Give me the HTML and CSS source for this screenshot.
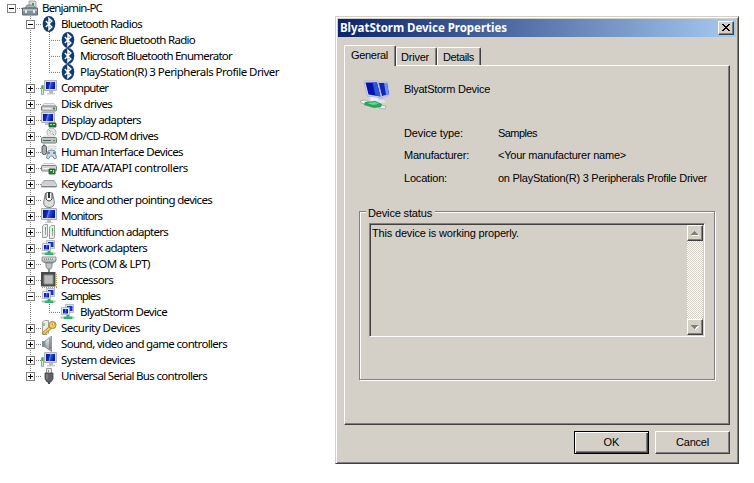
FILE: index.html
```html
<!DOCTYPE html>
<html lang="en">
<head>
<meta charset="utf-8">
<title>Device Manager</title>
<link rel="stylesheet" href="styles.css">
</head>
<body>
<svg class="defs" aria-hidden="true">
  <defs>
    <linearGradient id="scr" x1="0" y1="0" x2="1" y2=".2"><stop offset="0" stop-color="#0a1490"/><stop offset=".42" stop-color="#1428b8"/><stop offset=".5" stop-color="#6488f0"/><stop offset=".65" stop-color="#2444d8"/><stop offset="1" stop-color="#0818a8"/></linearGradient>
    <linearGradient id="met" x1="0" y1="0" x2="0" y2="1"><stop offset="0" stop-color="#f6f6f6"/><stop offset="1" stop-color="#8c9092"/></linearGradient>
    <symbol id="i-pc" viewBox="0 0 16 16"><path d="M7 1h6l1 1v7H7z" fill="#d8dcda" stroke="#8c9492" stroke-width=".8"/><path d="M10 3h2v3h-2z" fill="#30b030"/><path d="M3 8l2-3h6l3 3z" fill="#a8b4b8" stroke="#6c787c" stroke-width=".7"/><path d="M.5 8h15v7H.5z" fill="#82919a" stroke="#5c686e"/><path d="M1 9h14v2H1z" fill="#aebac0"/><path d="M3 10h2v3H3zM11 10h2v3h-2z" fill="#e4e8ea"/></symbol>
    <symbol id="i-bt" viewBox="0 0 16 16"><ellipse cx="8" cy="8" rx="6.300" ry="8" fill="#123c70"/><path d="M4.800 5l6 6L8 13.600V2.400L10.800 5l-6 6" fill="none" stroke="#fff" stroke-width="1.500"/></symbol>
    <symbol id="i-comp" viewBox="0 0 16 16"><path d="M.5 5.500h2v9h-2z" fill="#dce2dc" stroke="#8a948c" stroke-width=".8"/><path d="M1 6h1v3H1z" fill="#32b848"/><path d="M3.500.5h12v10h-12z" fill="#d8dbe0" stroke="#b0b4ba"/><path d="M5 2h9v7H5z" fill="url(#scr)"/><path d="M8 11h4v2H8z" fill="#b4b8bc"/><path d="M6 13h8v1.500H6z" fill="#c8cbce"/></symbol>
    <symbol id="i-disk" viewBox="0 0 16 16"><path d="M3 7.500h10l2.500 3H.5z" fill="#e9ebeb" stroke="#b4b8b8" stroke-width=".7"/><rect x=".5" y="10" width="15" height="5" rx="1" fill="#c9cdce" stroke="#777d7e"/><path d="M2 12h8v1H2z" fill="#eee"/><path d="M12 11.500h2v2h-2z" fill="#22a030"/></symbol>
    <symbol id="i-disp" viewBox="0 0 16 16"><path d="M.5.5h13v10H.5z" fill="#d8dbe0" stroke="#b0b4ba"/><path d="M2 2h10v7H2z" fill="url(#scr)"/><path d="M4 11h5v2H4z" fill="#c0c4c8"/><path d="M8 11h7v4H8z" fill="#267c38" stroke="#145628" stroke-width=".8"/><path d="M9 12h2v1H9zM12 12h2v1h-2z" fill="#b8dfa8"/></symbol>
    <symbol id="i-dvd" viewBox="0 0 16 16"><circle cx="10.500" cy="4.500" r="4.500" fill="#e5e8e6" stroke="#9ca4a0" stroke-width=".8"/><path d="M8 2l2 2M11 5l2 2" stroke="#58bf70"/><circle cx="10.500" cy="4.500" r="1.300" fill="#fff" stroke="#aaa" stroke-width=".6"/><path d="M3 7.500h10l2.500 2H.5z" fill="#e4e6e6"/><rect x=".5" y="9.500" width="15" height="5.500" rx="1" fill="#bfc4c6" stroke="#70787a"/><path d="M2 12h8v1H2z" fill="#555e60"/><path d="M12 12h2v1h-2z" fill="#22a030"/></symbol>
    <symbol id="i-hid" viewBox="0 0 16 16"><path d="M3 0v3" stroke="#777"/><rect x="1" y="1.500" width="4.500" height="9" rx="2" fill="#a7adb0" stroke="#4e5458"/><path d="M7 2h8v3H7z" fill="#eceeef" stroke="#c5c8ca" stroke-width=".7"/><path d="M7 7q3-2 7 0l1.500 7-2 1-2-3h-2l-2 3-2-1z" fill="#cedae4" stroke="#6d8494" stroke-width=".9"/><path d="M7 9h2M12 9h2" stroke="#426f98" stroke-width="1.300"/></symbol>
    <symbol id="i-ide" viewBox="0 0 16 16"><path d="M3 3.500h10l2 2H1z" fill="#f0f1f1" stroke="#bbb" stroke-width=".7"/><rect x=".5" y="5.500" width="15" height="5.500" rx="1" fill="#d0d3d4" stroke="#7e8485"/><path d="M2 8h7v1H2z" fill="#f5f5f5"/><path d="M8 9h6v5H8z" fill="#287f3a" stroke="#145628" stroke-width=".8"/><path d="M9 10h2v1H9zM12 10h1v3h-1z" fill="#b8dfa8"/></symbol>
    <symbol id="i-kb" viewBox="0 0 16 16"><path d="M3 4.500h10l2.500 4v2.500H.5V8.500z" fill="#d9dcdf" stroke="#92989c" stroke-width=".9"/><path d="M3.500 6h9M2.500 8h11" stroke="#a2a7ab" stroke-dasharray="1 1"/><path d="M1 10.500h14" stroke="#777d80"/></symbol>
    <symbol id="i-mouse" viewBox="0 0 16 16"><path d="M4.500 1q3.500-2 7 0l1.800 9q.2 5.500-5.300 5.500T2.700 10z" fill="#dcdedf" stroke="#707476" stroke-width=".9"/><path d="M5 1v6q3 4 6 0V1" fill="#f7f7f7" stroke="#404446"/><path d="M8 0v6" stroke="#35383a" stroke-width="2"/></symbol>
    <symbol id="i-mon" viewBox="0 0 16 16"><path d="M.5.5h15v11H.5z" fill="#dcdfe3" stroke="#a8acb2"/><path d="M2 2h12v8H2z" fill="url(#scr)"/><path d="M6 12h4v2H6z" fill="#b8bcc0"/><path d="M4 14h8v1H4z" fill="#c8cbce"/></symbol>
    <symbol id="i-multi" viewBox="0 0 16 16"><path d="M1.500 2l2-1.500h3V12l-1 1.500h-4zM8.500 3l2-1.500h3V13l-1 1.500h-4z" fill="#eceeec" stroke="#8d9490" stroke-width=".9"/><path d="M4.500 4v7M11.500 5v7" stroke="#a0a7a3"/><path d="M4 3h1v3H4zM11 4h1v3h-1z" fill="#35b24a"/></symbol>
    <symbol id="i-net" viewBox="0 0 16 16"><path d="M5.500.5h8v8h-8z" fill="#dce2ea" stroke="#a2acb8" stroke-width=".8"/><path d="M7 2h5.500v5H7z" fill="#1834c4"/><path d="M1.500 3.500h8v7h-8z" fill="#e4e9ef" stroke="#a2acb8" stroke-width=".8"/><path d="M3 5h5v4.500H3z" fill="url(#scr)"/><path d="M6.500 11h3v1.500h3v2.500h-9v-2.500h3z" fill="#2eb56c"/><path d="M.5 12.500h3v2h-3zM12.500 12.500h2v2h-2z" fill="#b8c6bf"/></symbol>
    <symbol id="i-port" viewBox="0 0 16 16"><path d="M1 1h14v4l-3 2H4L1 5z" fill="url(#met)" stroke="#71777a" stroke-width=".8"/><path d="M3 3h10" stroke="#5c6264" stroke-dasharray="1 1"/><path d="M5 7h6v4l-1.500 2h-3L5 11z" fill="#bfc4c7" stroke="#757b7e" stroke-width=".8"/><path d="M7 13h2v3H7z" fill="#888e91"/></symbol>
    <symbol id="i-cpu" viewBox="0 0 16 16"><path d="M1 15.500h15M15.500 2v14" stroke="#b89c50" stroke-dasharray="1 1"/><path d="M0 0h14.500v14.500H0z" fill="#4a4a48"/><path d="M3 3h9v9H3z" fill="#b9bbbc" stroke="#8b8d8e"/></symbol>
    <symbol id="i-sec" viewBox="0 0 16 16"><path d="M1.500 2l2-1.500h4V13l-1.500 1.500H1.500z" fill="#e9ebe8" stroke="#8d938c" stroke-width=".8"/><path d="M2.500 3h1v3h-1z" fill="#35a447"/><path d="M2 14l8-7" stroke="#a77e20" stroke-width="3.500"/><path d="M2.500 13.500l8-7" stroke="#f2cb5c" stroke-width="2"/><circle cx="11.500" cy="5" r="3.600" fill="#f2c95c" stroke="#a77e20" stroke-width=".9"/><circle cx="12.500" cy="4" r="1.200" fill="#fff" stroke="#a77e20" stroke-width=".6"/></symbol>
    <symbol id="i-snd" viewBox="0 0 16 16"><path d="M1 5h4v6H1z" fill="#859098"/><path d="M4 5l6.500-5v15.500L4 11z" fill="url(#met)" stroke="#78858e" stroke-width=".8"/><path d="M9 2v11" stroke="#56636c"/></symbol>
    <symbol id="i-usb" viewBox="0 0 16 16"><path d="M5.500.5h5v5h-5z" fill="#e5e7e8" stroke="#92979a"/><path d="M7 2h1v2H7z" fill="#888"/><path d="M4 5h8v6l-2 3H6l-2-3z" fill="#5c6265" stroke="#404548" stroke-width=".8"/><path d="M6 6v5" stroke="#92989b"/><path d="M7 14h2v2H7z" fill="#4b5053"/></symbol>
    <symbol id="i-big" viewBox="0 0 32 32"><path d="M16 2l13-1 2 15-8 3-4-1z" fill="#b9c3d8"/><path d="M18 3h10l2 11-7 2z" fill="#1024b8"/><path d="M25 3h3l2 11-3 1z" fill="#6b8ff0"/><path d="M5 1h14l4 17-15-2z" fill="#d2d9ea" stroke="#aab4cc" stroke-width=".8"/><path d="M6.500 2.500h11.500l3.500 14-12-2z" fill="#0712ac"/><path d="M13.500 2.500H18l3.500 14-5-1z" fill="#2c55df"/><path d="M11 17l8 1 1 4-8 1z" fill="#edf0f7"/><path d="M11 22q4-3 14-2l2 2q-8 3-15 1z" fill="#dfe3ed"/><path d="M1 21l5-1 4 2-3 2-5-1zM20 25l7 1-1 3-6-1z" fill="#edf3ee" stroke="#9aa69e" stroke-width=".8"/><path d="M6 22l10-1 7 3-1 3-7 1-10-3z" fill="#25a65b"/><path d="M8 23l8-1 4 2-6 1z" fill="#65d889"/></symbol>
  </defs>
</svg>
<main class="desktop">
  <ul class="tree">
    <li class="row l0"><i class="box minus"></i><i class="dots"></i><svg class="ico"><use href="#i-pc"/></svg><span data-w="60">Benjamin-PC</span></li>
    <li class="row"><i class="box minus"></i><i class="dots"></i><svg class="ico"><use href="#i-bt"/></svg><span data-w="81">Bluetooth Radios</span></li>
    <li class="row l2"><i class="dots"></i><svg class="ico"><use href="#i-bt"/></svg><span data-w="115">Generic Bluetooth Radio</span></li>
    <li class="row l2"><i class="dots"></i><svg class="ico"><use href="#i-bt"/></svg><span data-w="152">Microsoft Bluetooth Enumerator</span></li>
    <li class="row l2 last"><i class="dots"></i><svg class="ico"><use href="#i-bt"/></svg><span data-w="199">PlayStation(R) 3 Peripherals Profile Driver</span></li>
    <li class="row"><i class="box"></i><i class="dots"></i><svg class="ico"><use href="#i-comp"/></svg><span data-w="47">Computer</span></li>
    <li class="row"><i class="box"></i><i class="dots"></i><svg class="ico"><use href="#i-disk"/></svg><span data-w="51">Disk drives</span></li>
    <li class="row"><i class="box"></i><i class="dots"></i><svg class="ico"><use href="#i-disp"/></svg><span data-w="80">Display adapters</span></li>
    <li class="row"><i class="box"></i><i class="dots"></i><svg class="ico"><use href="#i-dvd"/></svg><span data-w="97">DVD/CD-ROM drives</span></li>
    <li class="row"><i class="box"></i><i class="dots"></i><svg class="ico"><use href="#i-hid"/></svg><span data-w="122">Human Interface Devices</span></li>
    <li class="row"><i class="box"></i><i class="dots"></i><svg class="ico"><use href="#i-ide"/></svg><span data-w="127">IDE ATA/ATAPI controllers</span></li>
    <li class="row"><i class="box"></i><i class="dots"></i><svg class="ico"><use href="#i-kb"/></svg><span data-w="51">Keyboards</span></li>
    <li class="row"><i class="box"></i><i class="dots"></i><svg class="ico"><use href="#i-mouse"/></svg><span data-w="151">Mice and other pointing devices</span></li>
    <li class="row"><i class="box"></i><i class="dots"></i><svg class="ico"><use href="#i-mon"/></svg><span data-w="41">Monitors</span></li>
    <li class="row"><i class="box"></i><i class="dots"></i><svg class="ico"><use href="#i-multi"/></svg><span data-w="107">Multifunction adapters</span></li>
    <li class="row"><i class="box"></i><i class="dots"></i><svg class="ico"><use href="#i-net"/></svg><span data-w="86">Network adapters</span></li>
    <li class="row"><i class="box"></i><i class="dots"></i><svg class="ico"><use href="#i-port"/></svg><span data-w="89">Ports (COM &amp; LPT)</span></li>
    <li class="row"><i class="box"></i><i class="dots"></i><svg class="ico"><use href="#i-cpu"/></svg><span data-w="52">Processors</span></li>
    <li class="row"><i class="box minus"></i><i class="dots"></i><svg class="ico"><use href="#i-net"/></svg><span data-w="39">Samples</span></li>
    <li class="row l2 last"><i class="dots"></i><svg class="ico"><use href="#i-net"/></svg><span data-w="87">BlyatStorm Device</span></li>
    <li class="row"><i class="box"></i><i class="dots"></i><svg class="ico"><use href="#i-sec"/></svg><span data-w="79">Security Devices</span></li>
    <li class="row"><i class="box"></i><i class="dots"></i><svg class="ico"><use href="#i-snd"/></svg><span data-w="166">Sound, video and game controllers</span></li>
    <li class="row"><i class="box"></i><i class="dots"></i><svg class="ico"><use href="#i-comp"/></svg><span data-w="74">System devices</span></li>
    <li class="row end"><i class="box"></i><i class="dots"></i><svg class="ico"><use href="#i-usb"/></svg><span data-w="146">Universal Serial Bus controllers</span></li>
  </ul>
  <section class="dialog">
    <header class="title"><span data-w="167">BlyatStorm Device Properties</span><button class="close" aria-label="Close"><svg width="8" height="7" viewBox="0 0 8 7" shape-rendering="crispEdges"><path d="M0 0h2v1h1v1h2V1h1V0h2v1H7v1H6v1H5v1h1v1h1v1h1v1H6V6H5V5H3v1H2v1H0V6h1V5h1V4h1V3H2V2H1V1H0z"/></svg></button></header>
    <nav class="tabs"><div class="tab active"><span data-w="37">General</span></div><div class="tab"><span data-w="28">Driver</span></div><div class="tab third"><span data-w="31">Details</span></div></nav>
    <div class="panel">
      <div class="device"><svg class="big"><use href="#i-big"/></svg><span data-w="86">BlyatStorm Device</span></div>
      <dl class="info">
        <dt><span data-w="59">Device type:</span></dt><dd><span data-w="39">Samples</span></dd>
        <dt><span data-w="65">Manufacturer:</span></dt><dd><span data-w="128">&lt;Your manufacturer name&gt;</span></dd>
        <dt><span data-w="43">Location:</span></dt><dd><span data-w="209">on PlayStation(R) 3 Peripherals Profile Driver</span></dd>
      </dl>
      <div class="group">
        <div class="legend"><span data-w="64">Device status</span></div>
        <div class="status"><p><span data-w="147">This device is working properly.</span></p>
          <div class="scroll"><div class="sb"><svg width="8" height="5" viewBox="0 0 8 5" shape-rendering="crispEdges"><path d="M1 4h7v1H1z" fill="#fff"/><path d="M3 0h1v1h1v1h1v1h1v1H0V3h1V2h1V1h1z" fill="#808080"/></svg></div><div class="sb"><svg width="8" height="5" viewBox="0 0 8 5" shape-rendering="crispEdges"><path d="M7 1h1v1H7v1H6v1H5v1H4V4h1V2h1V1z" fill="#fff"/><path d="M0 0h7v1H6v1H5v1H4v1H3V3H2V2H1V1H0z" fill="#808080"/></svg></div></div>
        </div>
      </div>
    </div>
    <footer class="buttons"><button class="btn ok"><span data-w="16">OK</span></button><button class="btn"><span data-w="33">Cancel</span></button></footer>
  </section>
</main>
<script src="fit.js"></script>
</body>
</html>
```
FILE: styles.css
```css
* { box-sizing: border-box; margin: 0; padding: 0; }
body { background: #fff; color: #000; overflow: hidden; }
.defs { position: absolute; width: 0; height: 0; }
.desktop { display: flex; align-items: flex-start; width: 754px; height: 483px; }
span { white-space: nowrap; }

.tree { width: 335px; list-style: none; font: 11.5px/16px "Noto Sans", "Open Sans", sans-serif; }
.row {
  display: flex; align-items: center; height: 16px; padding-left: 26px;
  background: repeating-linear-gradient(#808080 0 1px, transparent 1px 2px) 30px 0 / 1px 16px no-repeat;
}
.row.l0 { padding-left: 7px; background: none; }
.row.l2 {
  padding-left: 50px;
  background:
    repeating-linear-gradient(#808080 0 1px, transparent 1px 2px) 30px 0 / 1px 16px no-repeat,
    repeating-linear-gradient(#808080 0 1px, transparent 1px 2px) 49px 0 / 1px 16px no-repeat;
}
.row.l2.last { background-size: 1px 16px, 1px 9px; }
.row.end { background-size: 1px 9px; }
.row.l2 .dots { width: 10px; }
.box {
  width: 9px; height: 9px; flex: none; border: 1px solid #808080;
  background:
    linear-gradient(#000, #000) 1px 3px / 5px 1px no-repeat,
    linear-gradient(#000, #000) 3px 1px / 1px 5px no-repeat, #fff;
}
.box.minus { background: linear-gradient(#000, #000) 1px 3px / 5px 1px no-repeat, #fff; }
.dots { width: 6px; height: 1px; flex: none; background: repeating-linear-gradient(90deg, transparent 0 1px, #808080 1px 2px); }
.ico { width: 16px; height: 16px; flex: none; }
.row span { margin-left: 4px; }

.dialog {
  width: 404px; height: 448px; margin-top: 16px; padding: 1px; background: #d4d0c8;
  border: 1px solid; border-color: #d4d0c8 #404040 #404040 #d4d0c8;
  box-shadow: inset 1px 1px #fff, inset -1px -1px #808080;
  font: 11px/13px "Liberation Sans", Arial, sans-serif;
}
.title {
  display: flex; align-items: center; justify-content: space-between; height: 18px; margin: 1px;
  padding: 0 2px; background: linear-gradient(90deg, #0a246a, #a6caf0);
  color: #fff; font: bold 11.5px/18px "Noto Sans", "Open Sans", sans-serif;
}
button { background: #d4d0c8; border: 0; font: inherit; color: #000; }
.close, .sb, .btn {
  border: 1px solid; border-color: #fff #404040 #404040 #fff;
  box-shadow: inset -1px -1px #808080;
}
.close { display: flex; width: 16px; height: 14px; padding: 2px 0 0 3px; }
.tabs { display: flex; align-items: flex-end; height: 20px; margin: 8px 7px 0; }
.tab {
  height: 18px; width: 41px; padding: 3px 0 0 4px; border: 1px solid;
  border-color: #fff #404040 transparent #fff; border-bottom: 0; border-radius: 2px 2px 0 0;
  box-shadow: inset -1px 0 #808080;
}
.tab.active { position: relative; width: 52px; height: 21px; padding: 3px 0 0 6px; margin-bottom: -1px; background: #d4d0c8; }
.tab.third { width: 44px; padding-left: 5px; }
.panel {
  width: 386px; height: 360px; margin-left: 7px; padding: 14px;
  border: 1px solid; border-color: #fff #404040 #404040 #fff; box-shadow: inset -1px -1px #808080;
}
.device { display: flex; height: 47px; gap: 13px; }
.device span { margin-top: 3px; }
.big { width: 32px; height: 32px; }
.info { display: grid; grid-template-columns: 94px 1fr; grid-template-rows: 22px 23px 22px; height: 84px; margin-left: 45px; }
.group { width: 356px; height: 169px; border: 1px solid #808080; box-shadow: 1px 1px #fff, inset 1px 1px #fff; padding: 0 9px; }
.legend { width: 69px; height: 12px; margin: -6px 0 0 -3px; padding: 1px 0 0 2px; background: #d4d0c8; }
.status {
  display: flex; justify-content: space-between; width: 336px; height: 114px; margin-top: 5px;
  border: 1px solid; border-color: #808080 #fff #fff #808080; box-shadow: inset 1px 1px #404040; padding: 1px;
}
.status p { padding: 2px 1px; }
.scroll {
  display: flex; flex-direction: column; justify-content: space-between; width: 16px;
  background: repeating-conic-gradient(#fff 0 25%, #d4d0c8 0 50%) 0 0 / 2px 2px;
}
.sb { display: flex; align-items: center; justify-content: center; height: 16px; background: #d4d0c8; }
.buttons { display: flex; justify-content: flex-end; gap: 6px; margin: 6px 7px 0 0; }
.btn { width: 75px; height: 23px; padding-bottom: 1px; }
.btn.ok { border-color: #000; box-shadow: inset 1px 1px #fff, inset -1px -1px #404040, inset -2px -2px #808080; }
```
FILE: fit.js
```js
// Space each label's letters so it takes its designed width.
document.querySelectorAll('span[data-w]').forEach(function (el) {
  var gap = el.dataset.w - el.getBoundingClientRect().width;
  el.style.letterSpacing = gap / el.textContent.length + 'px';
});
```
